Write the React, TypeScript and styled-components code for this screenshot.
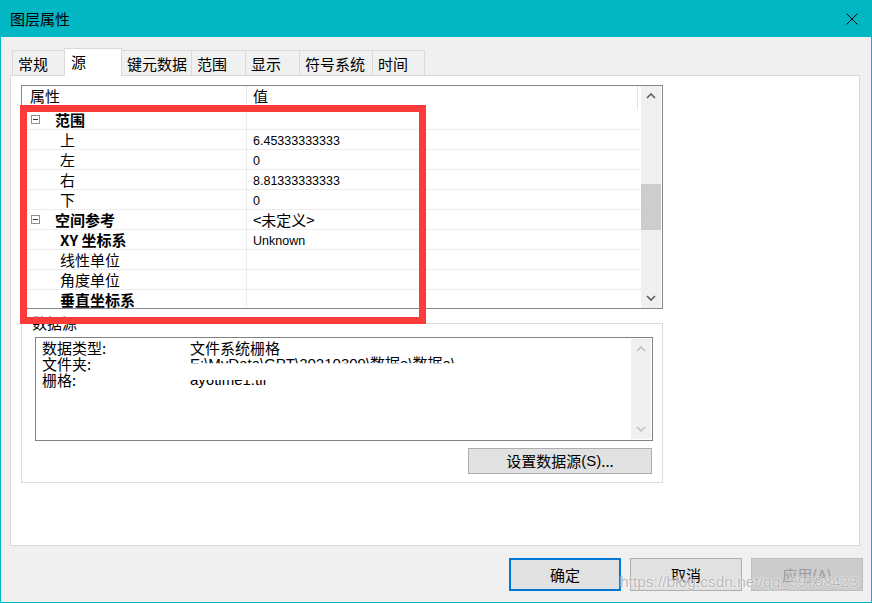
import styled, { createGlobalStyle } from "styled-components";

const CJK = `"Noto Sans CJK SC", "Liberation Sans", sans-serif`;
const LATIN = `"Liberation Sans", "Noto Sans CJK SC", sans-serif`;

const GlobalStyle = createGlobalStyle`
  html, body {
    margin: 0;
    padding: 0;
    background: #f0f0f0;
  }
  body {
    font-family: ${CJK};
    color: #000;
  }
  * {
    box-sizing: border-box;
  }
`;

interface PropRow {
  label: string;
  value?: string;
  group?: boolean;
  bold?: boolean;
  cjkValue?: boolean;
}

const rows: PropRow[] = [
  { label: "范围", group: true },
  { label: "上", value: "6.45333333333" },
  { label: "左", value: "0" },
  { label: "右", value: "8.81333333333" },
  { label: "下", value: "0" },
  { label: "空间参考", group: true, value: "<未定义>", cjkValue: true },
  { label: "XY 坐标系", bold: true, value: "Unknown" },
  { label: "线性单位" },
  { label: "角度单位" },
  { label: "垂直坐标系", bold: true },
];

const tabs = [
  { name: "常规", width: 53 },
  { name: "源", width: 58, active: true },
  { name: "键元数据", width: 71 },
  { name: "范围", width: 55 },
  { name: "显示", width: 55 },
  { name: "符号系统", width: 74 },
  { name: "时间", width: 53 },
];

function Chevron({ down, color }: { down?: boolean; color: string }) {
  return (
    <svg width="10" height="6" viewBox="0 0 10 6">
      <polyline
        points={down ? "1,1 5,5 9,1" : "1,5 5,1 9,5"}
        fill="none"
        stroke={color}
        strokeWidth="1.7"
      />
    </svg>
  );
}

function MinusBox() {
  return (
    <svg width="9" height="9" viewBox="0 0 9 9">
      <rect x="0.5" y="0.5" width="8" height="8" fill="#fff" stroke="#8f8f8f" />
      <line x1="2" y1="4.5" x2="7" y2="4.5" stroke="#333" />
    </svg>
  );
}

function App() {
  return (
    <Window>
      <GlobalStyle />
      <TitleBar>
        <span>图层属性</span>
        <svg width="12" height="12" viewBox="0 0 12 12">
          <path d="M0.5 0.5L11.5 11.5M11.5 0.5L0.5 11.5" stroke="#000" strokeWidth="1" />
        </svg>
      </TitleBar>
      <Body>
        <TabRow>
          {tabs.map((t) => (
            <Tab key={t.name} $width={t.width} $active={t.active}>
              {t.name}
            </Tab>
          ))}
        </TabRow>
        <Panel>
          <Grid>
            <Table>
              <HeaderRow>
                <HeadCell>属性</HeadCell>
                <HeadValue>值</HeadValue>
              </HeaderRow>
              {rows.map((r) => (
                <Row key={r.label}>
                  <LabelCell $indent={r.group ? 9 : 38}>
                    {r.group && <MinusBox />}
                    <Label $bold={r.group || r.bold} $group={r.group}>
                      {r.label}
                    </Label>
                  </LabelCell>
                  <ValueCell $cjk={r.cjkValue}>{r.value}</ValueCell>
                </Row>
              ))}
            </Table>
            <ScrollBar>
              <ScrollButton>
                <Chevron color="#606060" />
              </ScrollButton>
              <Track>
                <Thumb $offset={78} $size={46} />
              </Track>
              <ScrollButton>
                <Chevron down color="#606060" />
              </ScrollButton>
            </ScrollBar>
          </Grid>

          <GroupBox>
            <Legend>数据源</Legend>
            <TextBox>
              <Lines>
                <Line>
                  <Key>数据类型:</Key>
                  <span>文件系统栅格</span>
                </Line>
                <Line>
                  <Key>文件夹:</Key>
                  <Cut $keep="top">E:\MyData\GPT\20210309\数据a\数据a\</Cut>
                </Line>
                <Line>
                  <Key>栅格:</Key>
                  <Cut $keep="bottom">ay6time1.tif</Cut>
                </Line>
              </Lines>
              <ScrollBar $disabled>
                <ScrollButton>
                  <Chevron color="#c2c2c2" />
                </ScrollButton>
                <Track />
                <ScrollButton>
                  <Chevron down color="#c2c2c2" />
                </ScrollButton>
              </ScrollBar>
            </TextBox>
            <ButtonRow>
              <Button $width={184} $height={26}>
                设置数据源<Mnemonic>(S)</Mnemonic>...
              </Button>
            </ButtonRow>
          </GroupBox>
        </Panel>

        <Footer>
          <Button $width={112} $height={33} $primary>
            确定
          </Button>
          <Button $width={112} $height={33}>
            取消
          </Button>
          <Button $width={112} $height={33} $disabled>
            应用(A)
          </Button>
        </Footer>
      </Body>

      <Highlight />
      <Watermark>https://blog.csdn.net/qq_39798423</Watermark>
    </Window>
  );
}

export default App;

const Window = styled.div`
  position: relative;
  width: 872px;
  height: 603px;
  display: flex;
  flex-direction: column;
  border: 1px solid #00b7c3;
  border-top: none;
  background: #f0f0f0;
  overflow: hidden;
`;

const TitleBar = styled.div`
  height: 37px;
  flex-shrink: 0;
  display: flex;
  align-items: center;
  justify-content: space-between;
  padding: 0 14px 0 10px;
  margin: 0 -1px;
  background: #00b7c3;
  font-size: 15px;
  line-height: 20px;
`;

const Body = styled.div`
  flex: 1;
  display: flex;
  flex-direction: column;
  padding: 11px 8px 11px 9px;
`;

const TabRow = styled.div`
  display: flex;
  align-items: flex-end;
  height: 27px;
  padding-left: 2px;
  position: relative;
  z-index: 1;
`;

const Tab = styled.div<{ $width: number; $active?: boolean }>`
  width: ${(p) => p.$width}px;
  height: ${(p) => (p.$active ? 28 : 25)}px;
  margin-right: -1px;
  margin-bottom: ${(p) => (p.$active ? -1 : 0)}px;
  padding-left: ${(p) => (p.$active ? 6 : 5)}px;
  padding-bottom: ${(p) => (p.$active ? 3 : 0)}px;
  display: flex;
  align-items: center;
  border: 1px solid #d9d9d9;
  border-bottom: none;
  background: ${(p) => (p.$active ? "#fff" : "#f0f0f0")};
  position: relative;
  z-index: ${(p) => (p.$active ? 2 : 1)};
  font-size: 15px;
  white-space: nowrap;
`;

const Panel = styled.div`
  height: 471px;
  margin-right: 3px;
  border: 1px solid #d9d9d9;
  background: #fff;
  padding: 9px 0 0 10px;
  display: flex;
  flex-direction: column;
`;

const Grid = styled.div`
  width: 642px;
  height: 224px;
  border: 1px solid #828790;
  display: flex;
  overflow: hidden;
`;

const Table = styled.div`
  flex: 1;
  overflow: hidden;
`;

const HeaderRow = styled.div`
  display: flex;
  height: 24px;
`;

const HeadCell = styled.div`
  width: 225px;
  padding: 0 0 0 8px;
  border-right: 1px solid #e5e5e5;
  font-size: 15px;
  line-height: 20px;
`;

const HeadValue = styled.div`
  flex: 1;
  padding-left: 6px;
  font-size: 15px;
  line-height: 20px;
  border-right: 1px solid #e5e5e5;
  margin-right: 3px;
`;

const Row = styled.div`
  display: flex;
  height: 20px;
  border-bottom: 1px solid #ededed;
`;

const LabelCell = styled.div<{ $indent: number }>`
  width: 225px;
  flex-shrink: 0;
  display: flex;
  align-items: center;
  padding-left: ${(p) => p.$indent}px;
  border-right: 1px solid #ededed;
`;

const Label = styled.span<{ $bold?: boolean; $group?: boolean }>`
  margin-left: ${(p) => (p.$group ? 15 : 0)}px;
  font-size: 15px;
  line-height: 19px;
  font-weight: ${(p) => (p.$bold ? 700 : 400)};
  white-space: nowrap;
`;

const ValueCell = styled.div<{ $cjk?: boolean }>`
  flex: 1;
  padding-left: 6px;
  padding-top: ${(p) => (p.$cjk ? 0 : 3)}px;
  font-family: ${(p) => (p.$cjk ? CJK : LATIN)};
  font-size: ${(p) => (p.$cjk ? 15 : 12.5)}px;
  line-height: ${(p) => (p.$cjk ? 19 : 16)}px;
  white-space: nowrap;
`;

const ScrollBar = styled.div<{ $disabled?: boolean }>`
  width: 20px;
  flex-shrink: 0;
  margin: ${(p) => (p.$disabled ? "1px 1px 1px 0" : "0 1px 0 0")};
  display: flex;
  flex-direction: column;
  background: #f0f0f0;
`;

const ScrollButton = styled.div`
  height: 20px;
  display: flex;
  align-items: center;
  justify-content: center;
`;

const Track = styled.div`
  flex: 1;
  position: relative;
`;

const Thumb = styled.div<{ $offset: number; $size: number }>`
  margin-top: ${(p) => p.$offset}px;
  height: ${(p) => p.$size}px;
  background: #cdcdcd;
`;

const GroupBox = styled.div`
  position: relative;
  width: 642px;
  height: 160px;
  margin-top: 14px;
  border: 1px solid #dcdcdc;
  padding: 13px 9px 0 13px;
  display: flex;
  flex-direction: column;
`;

const Legend = styled.span`
  position: absolute;
  top: -10px;
  left: 9px;
  padding: 0 1px;
  background: #fff;
  font-size: 15px;
  line-height: 18px;
`;

const TextBox = styled.div`
  width: 618px;
  height: 104px;
  border: 1px solid #828282;
  display: flex;
`;

const Lines = styled.div`
  flex: 1;
  padding: 2px 6px;
  overflow: hidden;
`;

const Line = styled.div`
  display: flex;
  height: 16px;
  font-size: 15px;
  line-height: 16px;
  white-space: nowrap;
`;

const Key = styled.span`
  width: 148px;
  flex-shrink: 0;
`;

const Cut = styled.span<{ $keep: "top" | "bottom" }>`
  display: inline-block;
  font-family: ${LATIN};
  clip-path: ${(p) => (p.$keep === "top" ? "inset(0 0 55% 0)" : "inset(50% 0 0 0)")};
`;

const ButtonRow = styled.div`
  display: flex;
  justify-content: flex-end;
  margin-top: 7px;
  padding-right: 1px;
`;

const Button = styled.div<{
  $width: number;
  $height: number;
  $primary?: boolean;
  $disabled?: boolean;
}>`
  width: ${(p) => p.$width}px;
  height: ${(p) => p.$height}px;
  display: flex;
  align-items: center;
  justify-content: center;
  background: ${(p) => (p.$disabled ? "#cccccc" : "#e1e1e1")};
  border: ${(p) =>
    p.$primary ? "2px solid #0078d7" : p.$disabled ? "1px solid #bfbfbf" : "1px solid #adadad"};
  color: ${(p) => (p.$disabled ? "#9a9a9a" : "#000")};
  font-size: 15px;
  line-height: 20px;
  white-space: nowrap;
`;

const Mnemonic = styled.span`
  font-family: ${LATIN};
`;

const Footer = styled.div`
  display: flex;
  justify-content: flex-end;
  gap: 9px;
  margin-top: 12px;
`;

const Highlight = styled.div`
  position: absolute;
  left: 19px;
  top: 105px;
  width: 406px;
  height: 219px;
  border: 7px solid #fc3b3b;
  pointer-events: none;
`;

const Watermark = styled.div`
  position: absolute;
  left: 619px;
  top: 571px;
  font-family: ${LATIN};
  font-size: 15.5px;
  line-height: 22px;
  color: rgba(170, 170, 170, 0.85);
  text-shadow: 0 0 2px #fff, 0 0 1px #fff;
  pointer-events: none;
  white-space: nowrap;
`;
